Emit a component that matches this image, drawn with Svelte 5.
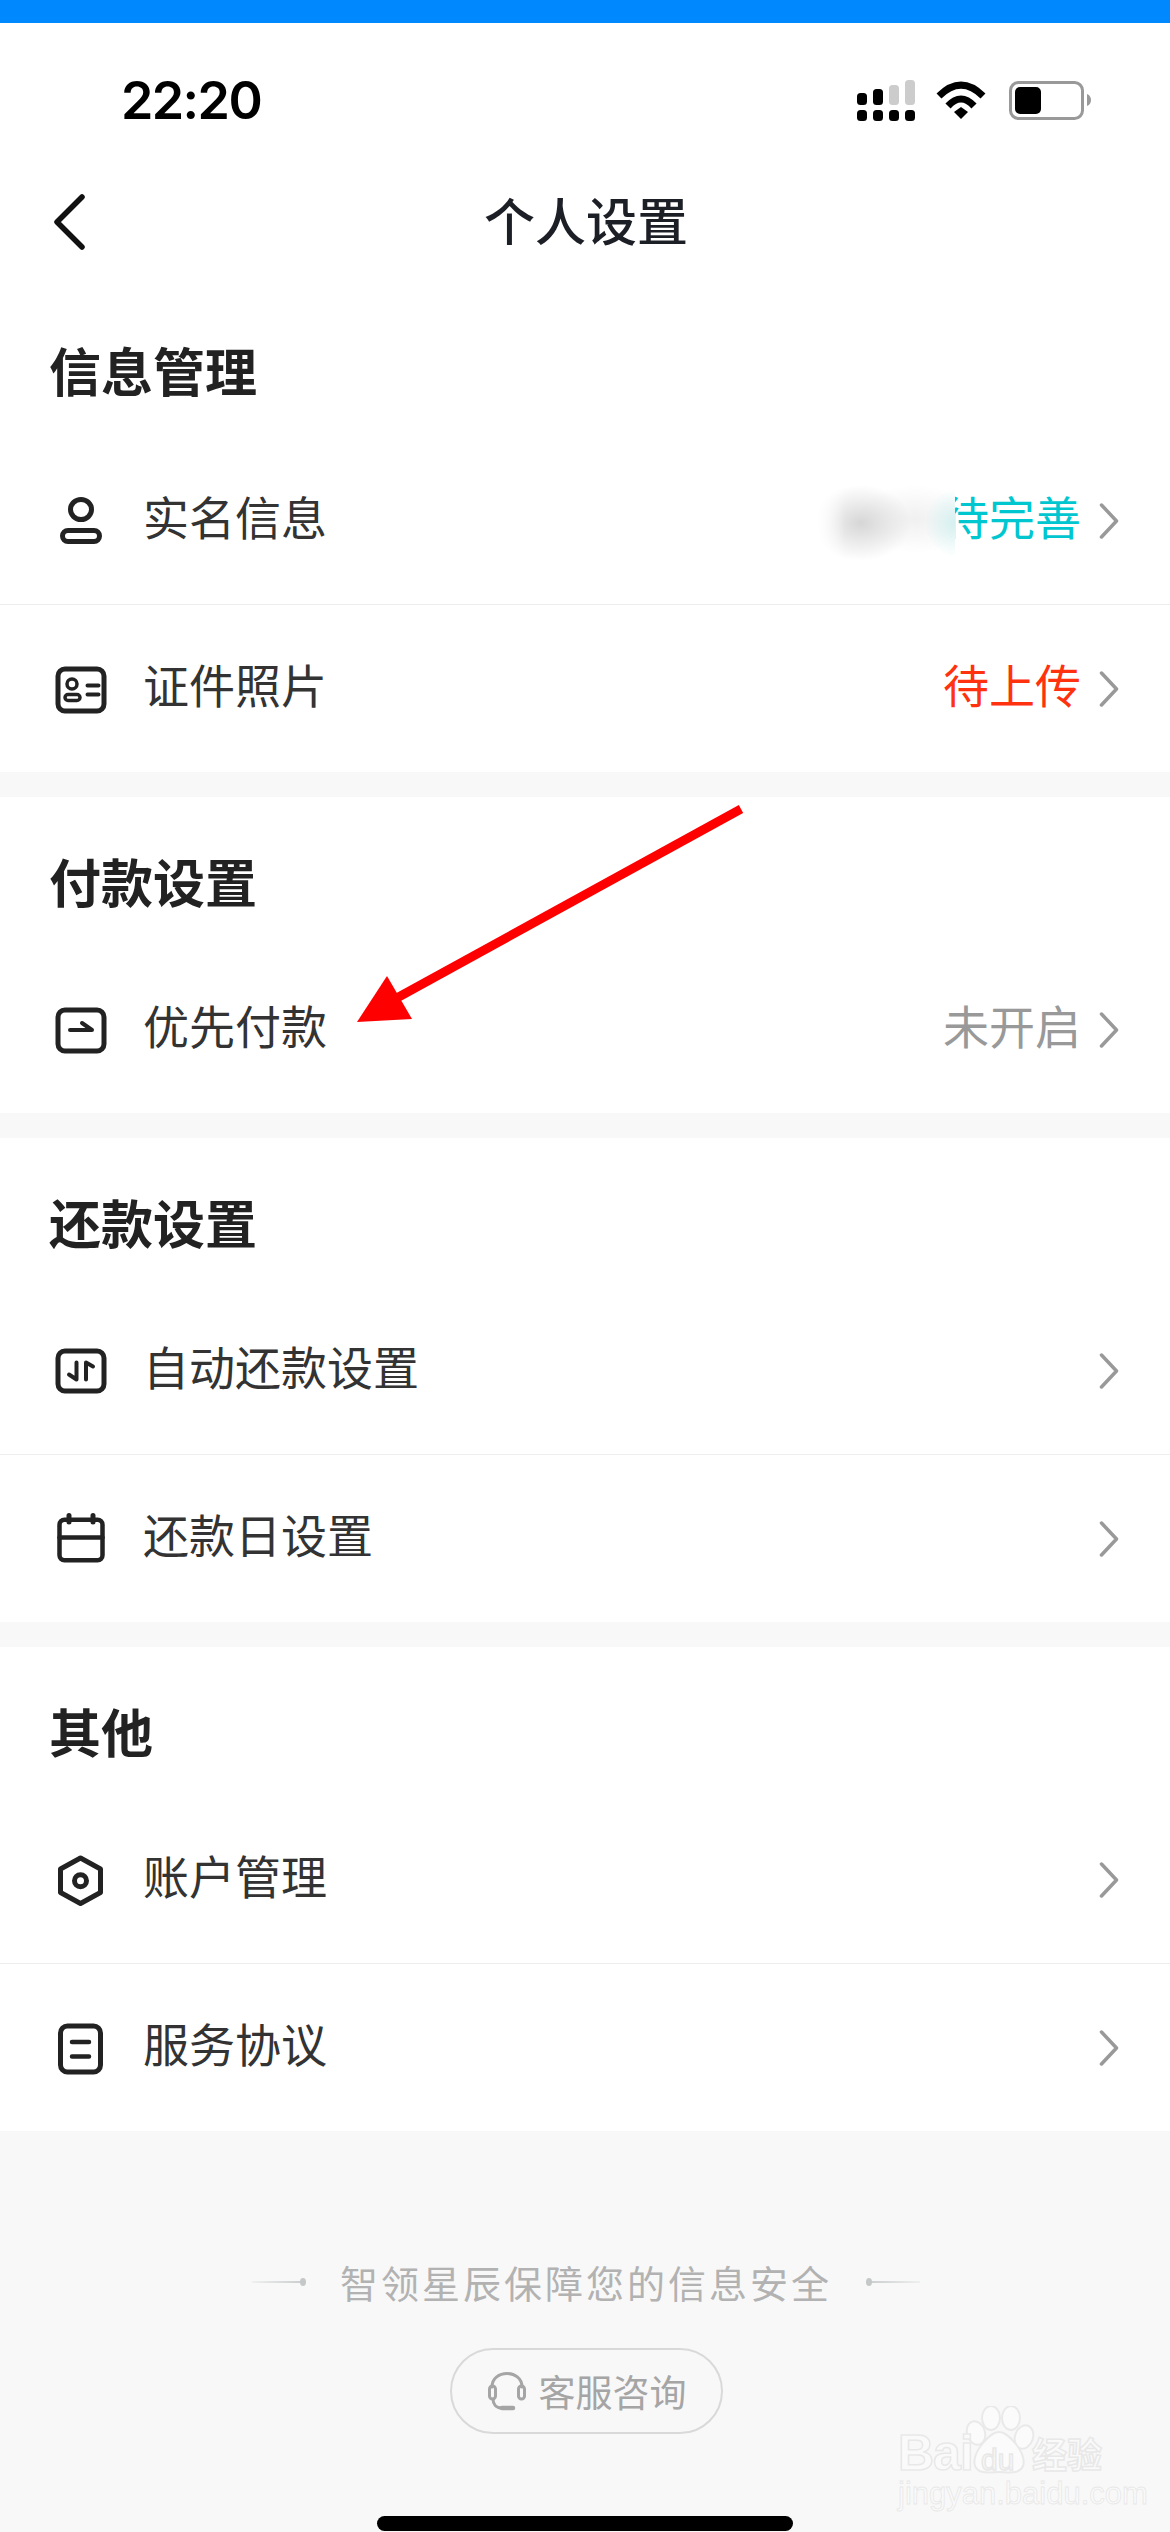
<script>
  const sections = [
    {
      title: '信息管理',
      rows: [
        { icon: 'person', label: '实名信息', value: '待完善', tone: 'cyan', blurred: true },
        { icon: 'card', label: '证件照片', value: '待上传', tone: 'red' }
      ]
    },
    {
      title: '付款设置',
      rows: [{ icon: 'pay', label: '优先付款', value: '未开启', tone: 'muted' }]
    },
    {
      title: '还款设置',
      rows: [
        { icon: 'swap', label: '自动还款设置' },
        { icon: 'calendar', label: '还款日设置' }
      ]
    },
    {
      title: '其他',
      rows: [
        { icon: 'hex', label: '账户管理' },
        { icon: 'doc', label: '服务协议' }
      ]
    }
  ];
</script>

<div class="page">
  <div class="topbar"></div>

  <div class="status">
    <span class="time">22:20</span>
    <svg class="status-icons" width="236" height="42" viewBox="0 0 236 42">
      <g fill="#000">
        <rect x="0" y="30" width="10" height="11" rx="3.5" />
        <rect x="16" y="30" width="10" height="11" rx="3.5" />
        <rect x="32" y="30" width="10" height="11" rx="3.5" />
        <rect x="48" y="30" width="10" height="11" rx="3.5" />
        <rect x="0" y="13" width="10" height="12" rx="3.5" />
        <rect x="16" y="9" width="10" height="16" rx="3.5" />
      </g>
      <g fill="#ccc">
        <rect x="32" y="5" width="10" height="20" rx="3.5" />
        <rect x="48" y="0" width="10" height="25" rx="3.5" />
      </g>
      <g fill="none" stroke="#000" stroke-width="7">
        <path d="M82 16 Q104 -6 126 16" />
        <path d="M91 26 Q104 12 117 26" />
      </g>
      <path d="M97 32 L104 27 L111 32 L104 39 Z" fill="#000" />
      <rect x="153.5" y="2.5" width="72" height="36" rx="8" fill="none" stroke="#999" stroke-width="3" />
      <rect x="158" y="7" width="26" height="27" rx="5" fill="#000" />
      <path d="M230 14 C233 15 234 18 234 20 C234 22 233 25 230 26 Z" fill="#999" />
    </svg>
  </div>

  <header class="nav">
    <svg class="back" width="34" height="56" viewBox="0 0 34 56">
      <path d="M30 3 L5 28 L30 53" fill="none" stroke="#111" stroke-width="5.5" stroke-linecap="round" stroke-linejoin="round" />
    </svg>
    <h1>个人设置</h1>
    <span></span>
  </header>

  {#each sections as section}
    <section class="group">
      <h2>{section.title}</h2>
      {#each section.rows as row}
        <div class="row">
          <svg class="icon" width="60" height="60" viewBox="0 0 60 60">
            {#if row.icon === 'person'}
              <ellipse cx="30" cy="18.5" rx="10.5" ry="10" />
              <rect x="11.5" y="39.5" width="37" height="11" rx="5.5" />
            {:else if row.icon === 'card'}
              <rect x="7" y="10" width="46" height="42" rx="7" />
              <circle cx="21" cy="25" r="5" stroke-width="3.5" />
              <rect x="14" y="35.5" width="15" height="6" rx="3" stroke-width="3.5" />
              <path d="M36.5 26.5 H47.5 M36.5 35.5 H47.5" stroke-width="4" />
            {:else if row.icon === 'pay'}
              <rect x="7" y="10" width="46" height="41" rx="7" />
              <path d="M19 30 H41 L31 23" stroke-width="4" />
            {:else if row.icon === 'swap'}
              <rect x="7" y="10" width="46" height="40" rx="7" />
              <path d="M25.5 21.5 V38.5 L18 33.5 M35 38.5 V21.5 L42 25.5" stroke-width="4" />
            {:else if row.icon === 'calendar'}
              <rect x="8.5" y="10.75" width="43" height="40.5" rx="5" stroke-width="4.5" />
              <path d="M8.5 28.5 H51.5" stroke-width="4.5" />
              <path d="M18 6.5 V13 M42 6.5 V13" stroke-width="5" />
            {:else if row.icon === 'hex'}
              <path d="M29.5 8 L49.5 19 V42.5 L29.5 53.5 L9.5 42.5 V19 Z" />
              <circle cx="29.5" cy="30.7" r="6" />
            {:else if row.icon === 'doc'}
              <rect x="9.5" y="8" width="40" height="46" rx="7" />
              <path d="M21 24 H38 M21 38.5 H38" stroke-width="4.5" />
            {/if}
          </svg>
          <span class="label">{row.label}</span>
          {#if row.value}
            <span class="value {row.tone}">{row.value}</span>
          {/if}
          {#if row.blurred}
            <div class="smudge"></div>
          {/if}
          <svg class="chev" width="20" height="36" viewBox="0 0 20 36">
            <path d="M2.5 2 L17.5 18 L2.5 34" fill="none" stroke="#999" stroke-width="3.5" stroke-linecap="round" stroke-linejoin="round" />
          </svg>
        </div>
      {/each}
    </section>
  {/each}

  <footer class="foot">
    <div class="safe">
      <span class="orn left"></span>
      <span class="safe-text">智领星辰保障您的信息安全</span>
      <span class="orn right"></span>
    </div>
    <div class="service">
      <svg width="40" height="40" viewBox="0 0 40 40" fill="none" stroke="#a5a5a5" stroke-width="3" stroke-linecap="round">
        <path d="M5 16 C5 -2 35 -2 35 16" />
        <rect x="2.5" y="15" width="6" height="13" rx="3" />
        <rect x="31.5" y="15" width="6" height="13" rx="3" />
        <path d="M6 28 C6 33 9 37 15 37" />
        <path d="M15 37 H26" stroke-width="4.5" />
      </svg>
      <span>客服咨询</span>
    </div>
    <div class="homebar"></div>

    <div class="watermark">
      <svg class="paw" width="90" height="90" viewBox="0 0 90 90">
        <g fill="#fbfbfb" stroke="#e9e9e9" stroke-width="2">
          <ellipse cx="15" cy="27" rx="9" ry="12" transform="rotate(-18 15 27)" />
          <ellipse cx="30" cy="12" rx="9" ry="12" />
          <ellipse cx="50" cy="12" rx="9" ry="12" />
          <ellipse cx="63" cy="31" rx="9" ry="12" transform="rotate(18 63 31)" />
          <path d="M38 26 C48 26 66 48 62 60 C58 69 46 66 38 66 C30 66 18 69 14 60 C10 48 28 26 38 26 Z" />
        </g>
      </svg>
      <span class="wm-bai">Bai</span>
      <span class="wm-du">du</span>
      <span class="wm-cn">经验</span>
      <span class="wm-url">jingyan.baidu.com</span>
    </div>
  </footer>

  <svg class="arrow" width="1170" height="2532" viewBox="0 0 1170 2532">
    <path d="M741 809 L395 999" stroke="#f00" stroke-width="9" />
    <path d="M387 976 L357 1022 L412 1019 Z" fill="#f00" />
  </svg>
</div>

<style>
  :global(body) {
    margin: 0;
    background: #f8f8f8;
  }

  .page {
    position: relative;
    width: 1170px;
    height: 2532px;
    overflow: hidden;
    background: #f8f8f8;
    font-family: "Noto Sans CJK SC", "Noto Sans", sans-serif;
    color: #333;
  }

  .topbar {
    height: 23px;
    background: #0089ff;
  }

  .status {
    height: 127px;
    background: #fff;
    box-sizing: border-box;
    padding: 57px 77px 0 121px;
    display: flex;
    justify-content: space-between;
    align-items: flex-start;
  }

  .time {
    font-family: Inter, "Liberation Sans", sans-serif;
    font-size: 52px;
    font-weight: 600;
    line-height: 42px;
    color: #000;
    letter-spacing: -1.6px;
  }

  .nav {
    height: 138px;
    background: #fff;
    box-sizing: border-box;
    padding: 6px 50px 0 52px;
    display: grid;
    grid-template-columns: 1fr auto 1fr;
    align-items: center;
  }

  .nav h1 {
    margin: -6px 0 0;
    font-size: 51px;
    font-weight: 500;
    line-height: 60px;
    color: #1d1f26;
  }

  .group {
    background: #fff;
    margin-bottom: 25px;
  }

  .group:last-of-type {
    margin-bottom: 0;
  }

  .group h2 {
    margin: 0;
    height: 93px;
    padding: 56px 0 0 49px;
    font-size: 52px;
    font-weight: 600;
    line-height: 56px;
    color: #222;
  }

  .group:first-of-type h2 {
    padding-top: 54px;
    height: 95px;
  }

  .row {
    position: relative;
    height: 167px;
    box-sizing: content-box;
    display: flex;
    align-items: center;
    padding: 0 51px;
    border-bottom: 1px solid #eee;
  }

  .row:last-child {
    border-bottom: none;
  }

  .icon {
    flex: none;
    fill: none;
    stroke: #222;
    stroke-width: 5;
    stroke-linecap: round;
    stroke-linejoin: round;
  }

  .label {
    margin-left: 32px;
    font-size: 46px;
    line-height: 60px;
    margin-top: -12px;
    flex: 1;
  }

  .value {
    font-size: 46px;
    line-height: 60px;
    margin-top: -12px;
    margin-right: 18px;
  }

  .cyan { color: #00c6d0; }
  .red { color: #ff3210; }
  .muted { color: #999; }

  .chev {
    flex: none;
    margin-top: 1px;
  }

  .smudge {
    position: absolute;
    left: 815px;
    top: 42px;
    width: 140px;
    height: 90px;
    background:
      radial-gradient(ellipse 50px 38px at 46px 44px, #d6d6d6, rgba(214, 214, 214, 0)),
      radial-gradient(ellipse 30px 34px at 140px 44px, rgba(200, 236, 236, 0.75), rgba(200, 236, 236, 0)),
      radial-gradient(ellipse 60px 34px at 100px 40px, #f0f0f0, rgba(240, 240, 240, 0)),
      #fff;
    -webkit-mask-image: linear-gradient(90deg, transparent 0, #000 30px);
    mask-image: linear-gradient(90deg, transparent 0, #000 30px);
  }

  .foot {
    position: relative;
    padding-top: 129px;
    display: flex;
    flex-direction: column;
    align-items: center;
    color: #b0b0b0;
  }

  .safe {
    height: 44px;
    display: flex;
    align-items: center;
    width: 669px;
    margin-left: 2px;
    justify-content: space-between;
  }

  .safe-text {
    font-size: 38px;
    line-height: 44px;
    letter-spacing: 3px;
    color: #b2b2b2;
  }

  .orn {
    position: relative;
    width: 54px;
    height: 2px;
  }

  .orn::after {
    content: "";
    position: absolute;
    top: -3px;
    width: 6px;
    height: 8px;
    border-radius: 50%;
    background: #c4c8c8;
  }

  .orn.left {
    background: linear-gradient(90deg, rgba(200, 205, 205, 0.2), #c8cccc);
  }

  .orn.left::after { right: 0; }

  .orn.right {
    background: linear-gradient(90deg, #c8cccc, rgba(200, 205, 205, 0.2));
  }

  .orn.right::after { left: 0; }

  .service {
    margin-top: 44px;
    margin-left: 3px;
    width: 273px;
    height: 86px;
    box-sizing: border-box;
    border: 2px solid #d9d9d9;
    border-radius: 43px;
    display: flex;
    align-items: center;
    justify-content: center;
    gap: 12px;
    font-size: 37px;
    color: #a5a5a5;
  }

  .homebar {
    margin-top: 82px;
    width: 416px;
    height: 15px;
    border-radius: 8px;
    background: #000;
  }

  .watermark {
    position: absolute;
    left: 898px;
    top: 269px;
    width: 210px;
    height: 110px;
    font-family: "Liberation Sans", sans-serif;
    color: #fafafa;
    -webkit-text-stroke: 1.5px #e8e8e8;
  }

  .paw {
    position: absolute;
    left: 63px;
    top: 6px;
  }

  .wm-bai, .wm-du, .wm-cn, .wm-url {
    position: absolute;
    white-space: nowrap;
  }

  .wm-bai {
    left: 0;
    top: 30px;
    font-size: 50px;
    line-height: 46px;
    font-weight: 700;
    letter-spacing: -1px;
  }

  .wm-du {
    left: 83px;
    top: 45px;
    font-size: 30px;
    line-height: 30px;
  }

  .wm-cn {
    left: 134px;
    top: 33px;
    font-family: "Noto Sans CJK SC", sans-serif;
    font-size: 35px;
    line-height: 40px;
    font-weight: 700;
  }

  .wm-url {
    left: 0;
    top: 79px;
    font-size: 31px;
    line-height: 30px;
    -webkit-text-stroke: 0.8px #e8e8e8;
  }

  .arrow {
    position: absolute;
    left: 0;
    top: 0;
    pointer-events: none;
  }
</style>
